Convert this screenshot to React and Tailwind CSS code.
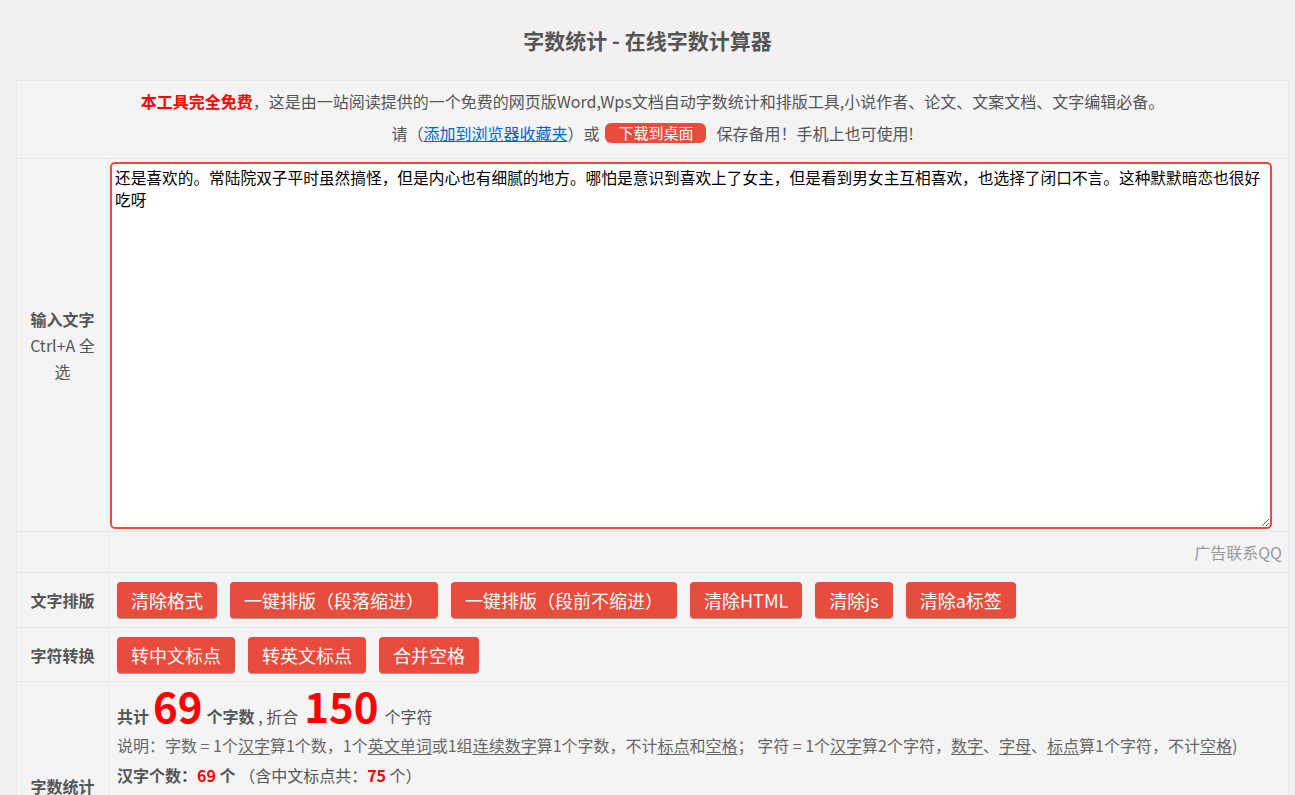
import React, { useState } from 'react';

const initialText =
  '还是喜欢的。常陆院双子平时虽然搞怪，但是内心也有细腻的地方。哪怕是意识到喜欢上了女主，但是看到男女主互相喜欢，也选择了闭口不言。这种默默暗恋也很好吃呀';

const Btn = ({ children }) => (
  <button className="h-[36px] px-[14px] bg-[#e74c3c] text-white text-[18px] rounded-[4px] shadow-[0_1px_1px_#999] leading-none">
    {children}
  </button>
);

const U = ({ children }) => <span className="underline underline-offset-2">{children}</span>;

const App = () => {
  const [text, setText] = useState(initialText);

  return (
    <div
      className="min-h-screen bg-[#f2f0f0] text-[#555] pb-10"
      style={{ fontFamily: '"Noto Sans CJK SC", "Noto Sans", sans-serif' }}
    >
      {/* Title */}
      <h1 className="h-[80px] flex items-center justify-center text-[21px] font-bold text-[#555] pt-[2px]">
        字数统计 - 在线字数计算器
      </h1>

      <div className="ml-[16px] mr-[6px] border border-[#e8e8e8] bg-[#f4f4f4] text-[16px]">
        {/* Intro */}
        <div className="h-[78px] flex flex-col items-center justify-center pb-[6px] border-b border-[#e8e8e8] leading-[32px]">
          <p>
            <span className="text-[#f00] font-bold">本工具完全免费</span>，这是由一站阅读提供的一个免费的网页版Word,Wps文档自动字数统计和排版工具,小说作者、论文、文案文档、文字编辑必备。
          </p>
          <p className="flex items-center">
            请（<a href="#" className="text-[#0066cc] underline">添加到浏览器收藏夹</a>）或
            <span className="ml-[6px] mr-[10px] px-[13px] h-[20px] leading-[20px] bg-[#e74c3c] text-white rounded-[6px] text-[15px]">下载到桌面</span>
            保存备用！手机上也可使用!
          </p>
        </div>

        {/* Input */}
        <div className="grid grid-cols-[92px_1fr] border-b border-[#e8e8e8]">
          <div className="flex flex-col items-center justify-center text-center border-r border-[#e8e8e8] px-[8px] leading-[26px]">
            <span className="font-bold">输入文字</span>
            <span>Ctrl+A 全选</span>
          </div>
          <div className="pt-[3px] pb-[2px] pl-[1px] pr-[16px]">
            <textarea
              value={text}
              onChange={(e) => setText(e.target.value)}
              className="block w-full h-[367px] border-2 border-[#e74c3c] rounded-[5px] bg-white text-black text-[15.7px] leading-[22px] px-[3px] py-[3px] outline-none resize-y"
            />
          </div>
        </div>

        {/* Ad row */}
        <div className="grid grid-cols-[92px_1fr] h-[41px] border-b border-[#e8e8e8]">
          <div className="border-r border-[#e8e8e8]" />
          <div className="flex items-center justify-end pr-[6px] text-[#999]">广告联系QQ</div>
        </div>

        {/* Layout buttons */}
        <div className="grid grid-cols-[92px_1fr] h-[55px] border-b border-[#e8e8e8]">
          <div className="flex items-center justify-center font-bold border-r border-[#e8e8e8]">文字排版</div>
          <div className="flex items-center gap-[13px] pl-[8px]">
            <Btn>清除格式</Btn>
            <Btn>一键排版（段落缩进）</Btn>
            <Btn>一键排版（段前不缩进）</Btn>
            <Btn>清除HTML</Btn>
            <Btn>清除js</Btn>
            <Btn>清除a标签</Btn>
          </div>
        </div>

        {/* Character conversion */}
        <div className="grid grid-cols-[92px_1fr] h-[54px] border-b border-[#e8e8e8]">
          <div className="flex items-center justify-center font-bold border-r border-[#e8e8e8]">字符转换</div>
          <div className="flex items-center gap-[13px] pl-[8px]">
            <Btn>转中文标点</Btn>
            <Btn>转英文标点</Btn>
            <Btn>合并空格</Btn>
          </div>
        </div>

        {/* Stats */}
        <div className="grid grid-cols-[92px_1fr] h-[208px]">
          <div className="flex items-center justify-center font-bold border-r border-[#e8e8e8]">字数统计</div>
          <div className="pl-[8px] pt-[2px]">
            <div className="flex items-baseline h-[46px]">
              <span className="font-bold">共计</span>
              <span className="text-[#f00] font-bold text-[42px] leading-none mx-[4px]">69</span>
              <span className="font-bold">个字数</span>
              <span>&nbsp;,&nbsp;折合</span>
              <span className="text-[#f00] font-bold text-[42px] leading-none mx-[6px]">150</span>
              <span>个字符</span>
            </div>
            <p className="text-[#666] leading-[30px]">
              说明：字数 = 1个<U>汉字</U>算1个数，1个<U>英文单词</U>或1组<U>连续数字</U>算1个字数，不计<U>标点</U>和<U>空格</U>； 字符 = 1个<U>汉字</U>算2个字符，<U>数字</U>、<U>字母</U>、<U>标点</U>算1个字符，不计<U>空格</U>)
            </p>
            <p className="leading-[30px]">
              <span className="font-bold">汉字个数：<span className="text-[#f00]">69</span> 个</span> （含中文标点共：<span className="text-[#f00] font-bold">75</span> 个）
            </p>
          </div>
        </div>
      </div>
    </div>
  );
};

export default App;
